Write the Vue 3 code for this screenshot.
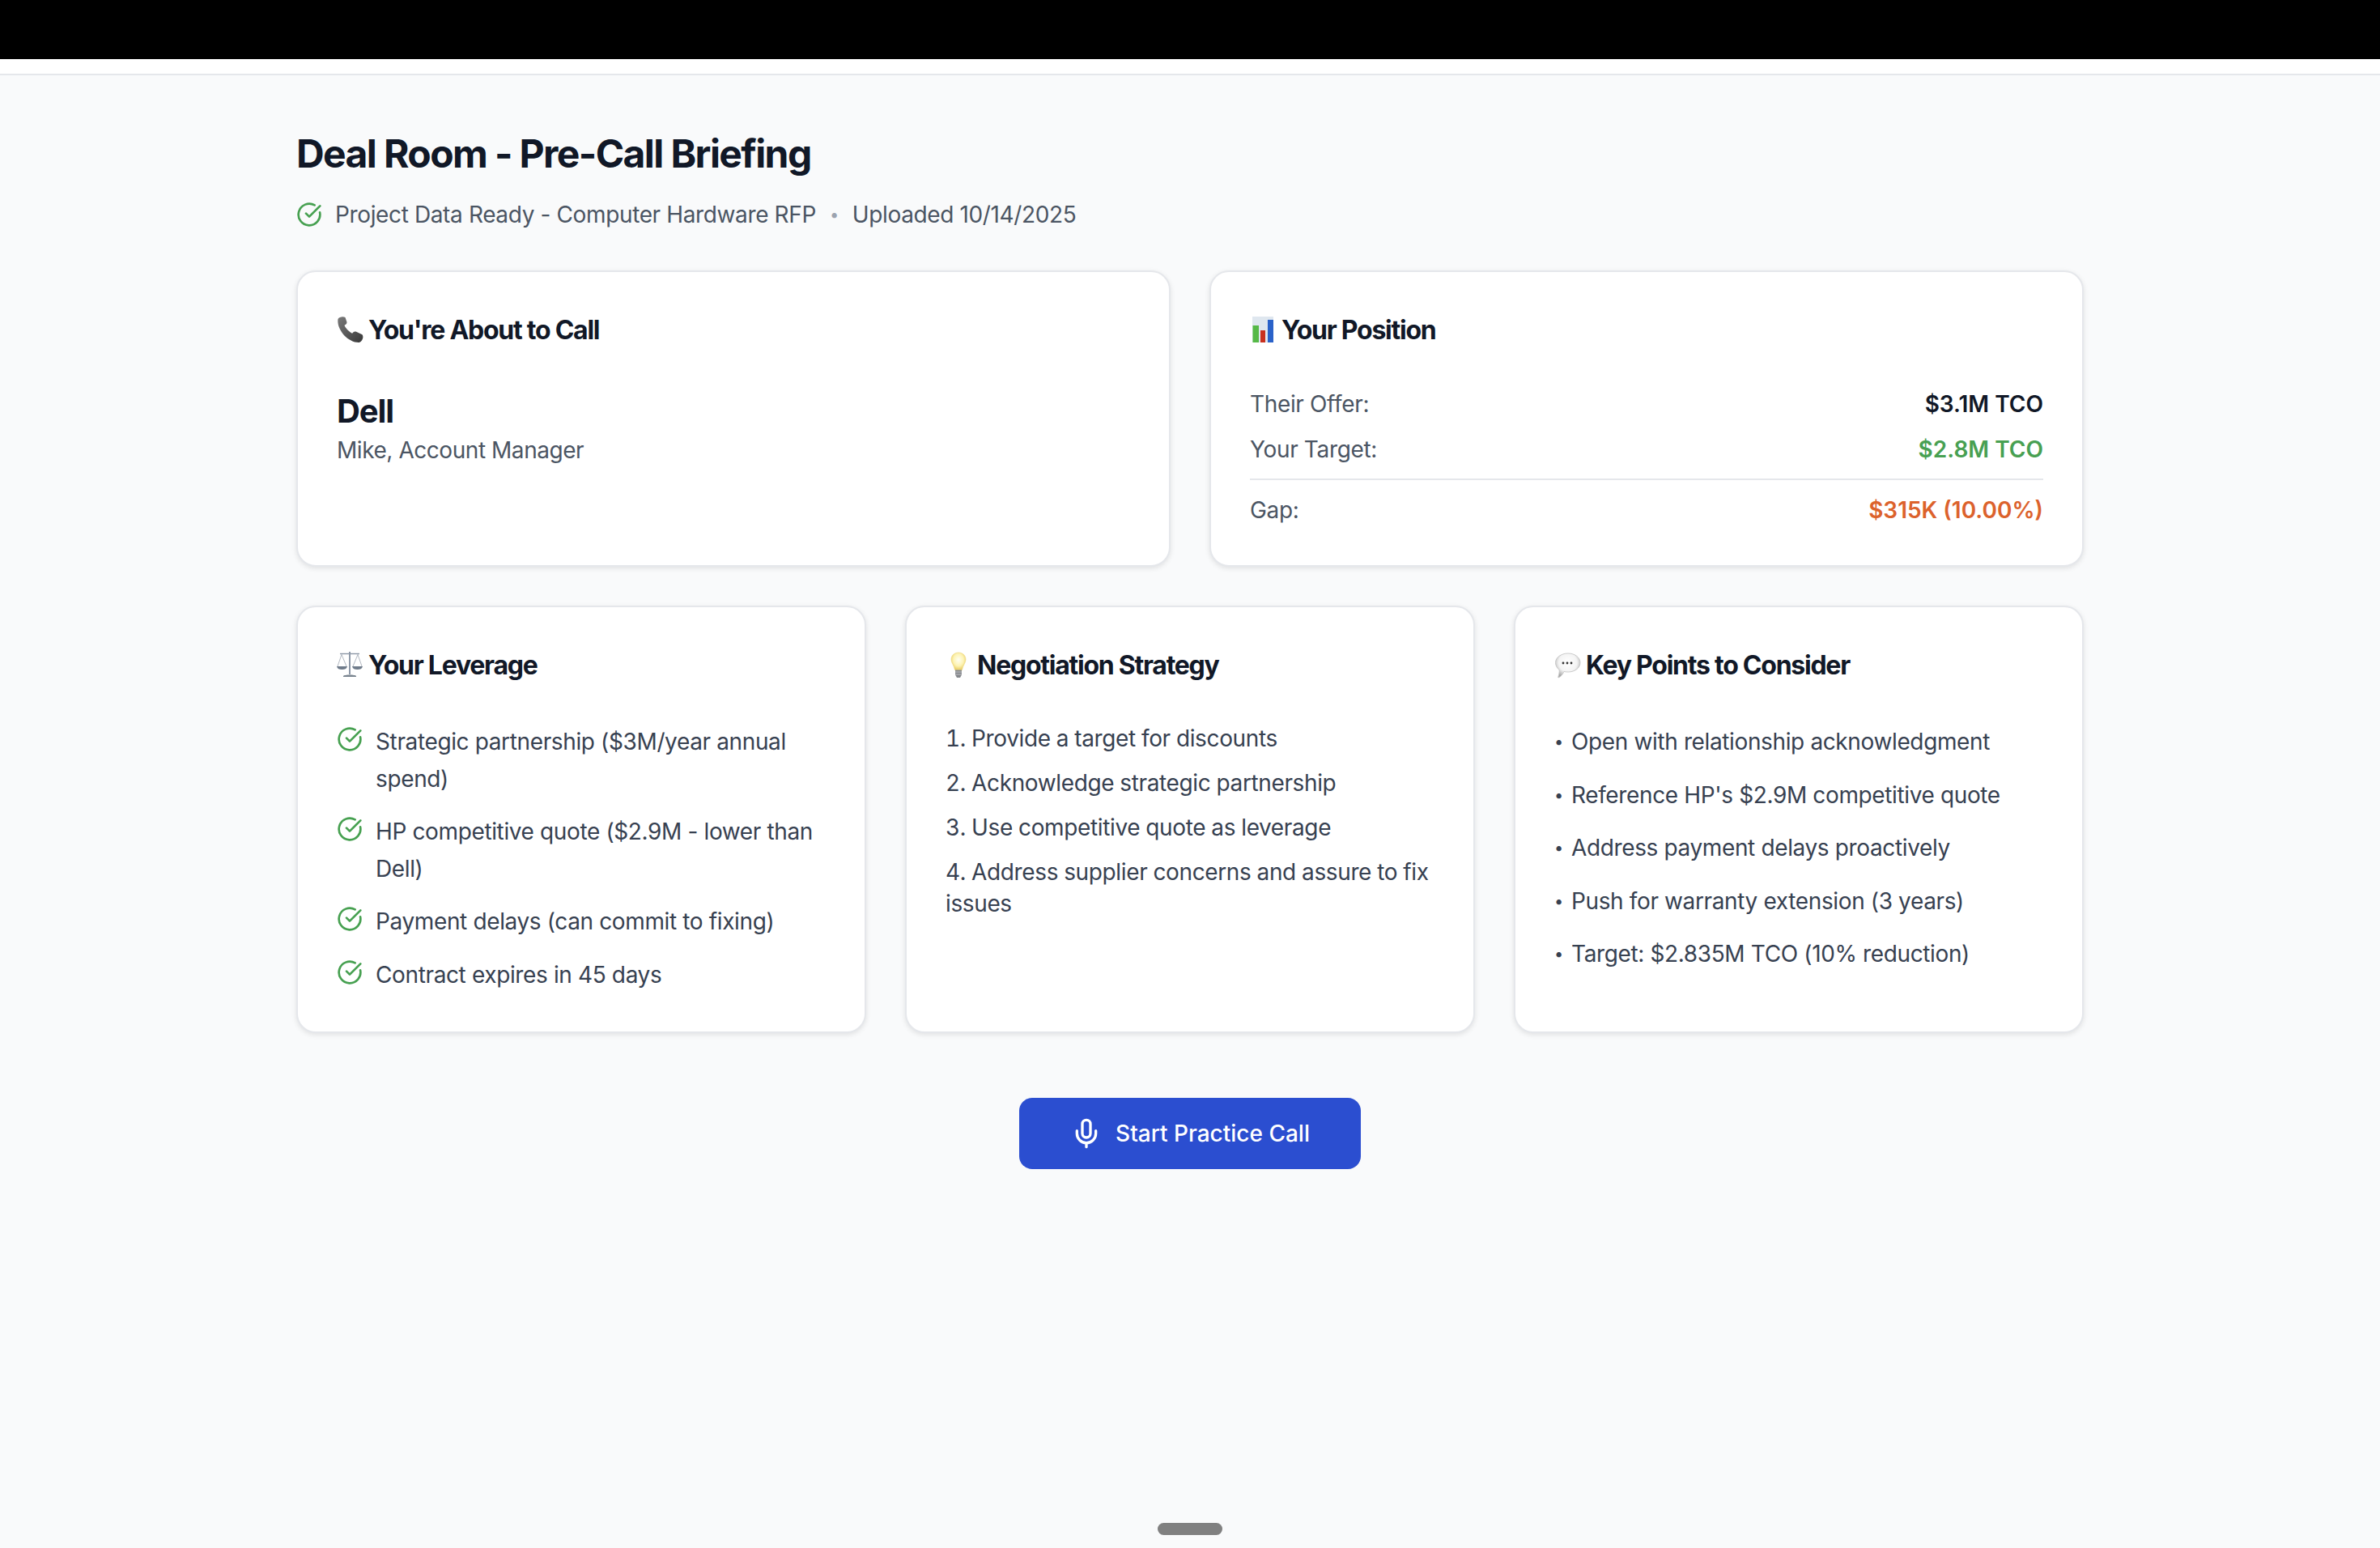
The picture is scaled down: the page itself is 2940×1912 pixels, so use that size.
<script setup>
const leverage = [
  'Strategic partnership ($3M/year annual spend)',
  'HP competitive quote ($2.9M - lower than Dell)',
  'Payment delays (can commit to fixing)',
  'Contract expires in 45 days'
]
const strategy = [
  '1. Provide a target for discounts',
  '2. Acknowledge strategic partnership',
  '3. Use competitive quote as leverage',
  '4. Address supplier concerns and assure to fix issues'
]
const points = [
  'Open with relationship acknowledgment',
  "Reference HP's $2.9M competitive quote",
  'Address payment delays proactively',
  'Push for warranty extension (3 years)',
  'Target: $2.835M TCO (10% reduction)'
]
</script>

<template>
  <div class="page">
    <div class="blackbar"></div>
    <div class="whitebar"></div>
    <main class="main">
      <h1 class="title">Deal Room - Pre-Call Briefing</h1>
      <div class="sub">
        <svg class="check" viewBox="0 0 24 24"><path d="M21.801 10A10 10 0 1 1 17 3.335" /><path d="m9 11 3 3L22 4" /></svg>
        <span>Project Data Ready - Computer Hardware RFP</span>
        <span class="dot">•</span>
        <span>Uploaded 10/14/2025</span>
      </div>

      <div class="row two">
        <section class="card">
          <h2 class="head">
            <svg class="emoji" viewBox="0 0 39 40">
              <defs><linearGradient id="ph" x1="0" y1="0" x2="1" y2="1"><stop offset="0" stop-color="#7a7a7a" /><stop offset="1" stop-color="#383838" /></linearGradient></defs>
              <path fill="url(#ph)" d="M1.500 6C3 3.500 7.500 2.500 10.500 4l2 6c0 2.200-2 3.300-3 3.800 1 3 5 7.500 9.500 10 1-1 2.200-2.800 4.500-2.300l8 3.700c2.200 3.200.2 8.500-3.800 9.800C14 35.500-.5 19 1.500 6Z" />
            </svg>You're About to Call
          </h2>
          <div class="company">Dell</div>
          <div class="contact">Mike, Account Manager</div>
        </section>

        <section class="card">
          <h2 class="head">
            <svg class="emoji" viewBox="0 0 39 40">
              <rect x="3" y="3" width="26" height="32" fill="#dfe7ef" />
              <rect x="3.500" y="14" width="7.500" height="21" fill="#56b947" />
              <rect x="13" y="20" width="6" height="15" fill="#c9301f" />
              <rect x="22" y="7" width="7" height="28" fill="#2a62c9" />
            </svg>Your Position
          </h2>
          <div class="pos"><span>Their Offer:</span><b class="dark">$3.1M TCO</b></div>
          <div class="pos"><span>Your Target:</span><b class="green">$2.8M TCO</b></div>
          <div class="pos gap"><span>Gap:</span><b class="orange">$315K (10.00%)</b></div>
        </section>
      </div>

      <div class="row three">
        <section class="card">
          <h2 class="head">
            <svg class="emoji" viewBox="0 0 39 40">
              <g fill="none" stroke="#a9b0ba" stroke-width="0.9"><path d="M6 6.500 1 21M6 6.500 12 21M26 6.500 20 21M26 6.500 31 21" /></g>
              <path d="M4 5.500h24" stroke="#8b96a5" stroke-width="1.400" fill="none" />
              <rect x="15" y="3" width="2" height="28" fill="#8f9aa9" />
              <path d="M0 21h13c-.8 3-3 4-6.500 4S.8 24 0 21ZM19 21h13c-.8 3-3 4-6.500 4s-5.700-1-6.500-4Z" fill="#6f7b8a" />
              <path d="M8 33c1-2 15-2 16 0v1H8Z" fill="#79848f" />
            </svg>Your Leverage
          </h2>
          <ul class="list lev">
            <li v-for="t in leverage" :key="t">
              <svg class="check" viewBox="0 0 24 24"><path d="M21.801 10A10 10 0 1 1 17 3.335" /><path d="m9 11 3 3L22 4" /></svg>
              <span>{{ t }}</span>
            </li>
          </ul>
        </section>

        <section class="card">
          <h2 class="head">
            <svg class="emoji" viewBox="0 0 39 40">
              <defs><radialGradient id="bl" cx="0.5" cy="0.42" r="0.58"><stop offset="0" stop-color="#fffff2" /><stop offset="0.6" stop-color="#fdf3b4" /><stop offset="1" stop-color="#e9cd62" /></radialGradient></defs>
              <path d="M16 4c5.500 0 9 4 9 8.500 0 4.500-3.500 7-4.500 13h-9C10.500 19.500 7 17 7 12.500 7 8 10.500 4 16 4Z" fill="url(#bl)" stroke="#efd982" stroke-width="0.6" />
              <path d="M12 25.500h8v6l-2 3.500h-4l-2-3.500Z" fill="#85888c" />
              <path d="M12 28h8M12 31h8" stroke="#c9cbcd" stroke-width="0.9" />
            </svg>Negotiation Strategy
          </h2>
          <ol class="list strat">
            <li v-for="t in strategy" :key="t">{{ t }}</li>
          </ol>
        </section>

        <section class="card">
          <h2 class="head">
            <svg class="emoji" viewBox="0 0 39 40">
              <defs><radialGradient id="sp" cx="0.5" cy="0.38" r="0.62"><stop offset="0" stop-color="#ffffff" /><stop offset="0.6" stop-color="#f4f4f4" /><stop offset="1" stop-color="#a6a6a6" /></radialGradient></defs>
              <path d="M17 5c8.500 0 15 5 15 11.500S25.500 28 17 28c-2 0-3.500-.2-5-.6-1.500 3.500-4 6.600-7 7.600-1 0 1.500-4 1.200-9.500C3.500 23.500 1.500 20 1.500 16.500 1.500 10 8.500 5 17 5Z" fill="url(#sp)" stroke="#c6c6c6" stroke-width="0.9" />
              <circle cx="11" cy="17" r="1.400" fill="#333" /><circle cx="16" cy="17" r="1.400" fill="#333" /><circle cx="21" cy="17" r="1.400" fill="#333" />
            </svg>Key Points to Consider
          </h2>
          <ul class="list pts">
            <li v-for="t in points" :key="t"><span class="bul">•</span>{{ t }}</li>
          </ul>
        </section>
      </div>

      <div class="cta">
        <button class="btn" type="button">
          <svg class="mic" viewBox="0 0 24 24"><path d="M12 2a3 3 0 0 0-3 3v7a3 3 0 0 0 6 0V5a3 3 0 0 0-3-3Z" /><path d="M19 10v2a7 7 0 0 1-14 0v-2" /><line x1="12" x2="12" y1="19" y2="22" /></svg>
          Start Practice Call
        </button>
      </div>
    </main>
    <div class="home"></div>
  </div>
</template>

<style>
html, body { margin: 0; padding: 0; background: #f9fafb; }
</style>

<style scoped>
.page {
  position: relative;
  min-height: 1912px;
  background: #f9fafb;
  font-family: Inter, "Liberation Sans", sans-serif;
  color: #374151;
  overflow: hidden;
}
.blackbar { height: 73px; background: #000; }
.whitebar { height: 18px; background: #fff; border-bottom: 2px solid #e5e7eb; }
.main { width: 2208px; margin: 0 auto; padding-top: 64px; }
.title {
  margin: 0 0 22px;
  font-size: 48px;
  line-height: 66px;
  font-weight: 650;
  letter-spacing: -1.6px;
  color: #111827;
}
.sub {
  display: flex;
  align-items: center;
  height: 40px;
  font-size: 28px;
  line-height: 40px;
  letter-spacing: -0.37px;
  color: #4b5563;
  margin-bottom: 49px;
}
.sub .check { margin-right: 16px; }
.dot { margin: 0 17px; font-size: 20px; color: #9ca3af; }
.check {
  width: 32px;
  height: 32px;
  flex: none;
  fill: none;
  stroke: #46a050;
  stroke-width: 2;
  stroke-linecap: round;
  stroke-linejoin: round;
}
.row { display: grid; gap: 48px; margin-bottom: 48px; }
.two { grid-template-columns: 1fr 1fr; }
.three { grid-template-columns: 1fr 1fr 1fr; margin-bottom: 80px; }
.card {
  background: #fff;
  border: 2px solid #e5e7eb;
  border-radius: 24px;
  padding: 48px;
  box-shadow: 0 2px 6px rgba(0, 0, 0, 0.1);
  min-width: 0;
}
.head {
  display: flex;
  align-items: center;
  height: 48px;
  margin: 0 0 47px;
  font-size: 32px;
  line-height: 48px;
  font-weight: 650;
  letter-spacing: -1.25px;
  color: #111827;
}
.emoji { width: 39px; height: 40px; flex: none; }
.company {
  font-size: 40px;
  line-height: 56px;
  font-weight: 650;
  letter-spacing: -1.1px;
  color: #111827;
  padding-top: 1px;
}
.contact { font-size: 28px; line-height: 40px; letter-spacing: -0.45px; color: #4b5563; }
.pos {
  display: flex;
  justify-content: space-between;
  font-size: 28px;
  line-height: 40px;
  color: #4b5563;
  margin-bottom: 16px;
}
.pos span { letter-spacing: -0.35px; }
.pos b { font-weight: 600; }
.pos.gap { border-top: 2px solid #e5e7eb; padding-top: 17px; margin-bottom: 0; }
.dark { color: #111827; }
.green { color: #48a052; }
.orange { color: #dc622c; }
.list {
  list-style: none;
  margin: 0;
  padding: 0;
  font-size: 28px;
  letter-spacing: -0.37px;
  color: #374151;
}
.lev, .pts { padding-top: 1px; margin-bottom: -1px; }
.lev li { display: flex; gap: 16px; line-height: 45.5px; }
.lev li + li { margin-top: 20px; }
.lev .check { margin-top: 3px; }
.strat li { line-height: 39px; font-variant-numeric: tabular-nums; }
.strat li + li { margin-top: 16px; }
.pts li { line-height: 45.5px; }
.pts li + li { margin-top: 20px; }
.bul {
  display: inline-block;
  width: 21px;
  font-size: 20px;
  line-height: 1;
  vertical-align: 3px;
}
.cta { display: flex; justify-content: center; }
.btn {
  display: inline-flex;
  align-items: center;
  gap: 16px;
  height: 88px;
  padding: 0 63px;
  border: 0;
  border-radius: 16px;
  background: #2b4ed0;
  color: #fff;
  font-family: inherit;
  font-size: 28px;
  font-weight: 500;
}
.mic {
  width: 40px;
  height: 40px;
  fill: none;
  stroke: #fff;
  stroke-width: 2;
  stroke-linecap: round;
  stroke-linejoin: round;
}
.home {
  position: absolute;
  left: 1430px;
  top: 1881px;
  width: 80px;
  height: 15px;
  border-radius: 8px;
  background: #808080;
}
</style>
